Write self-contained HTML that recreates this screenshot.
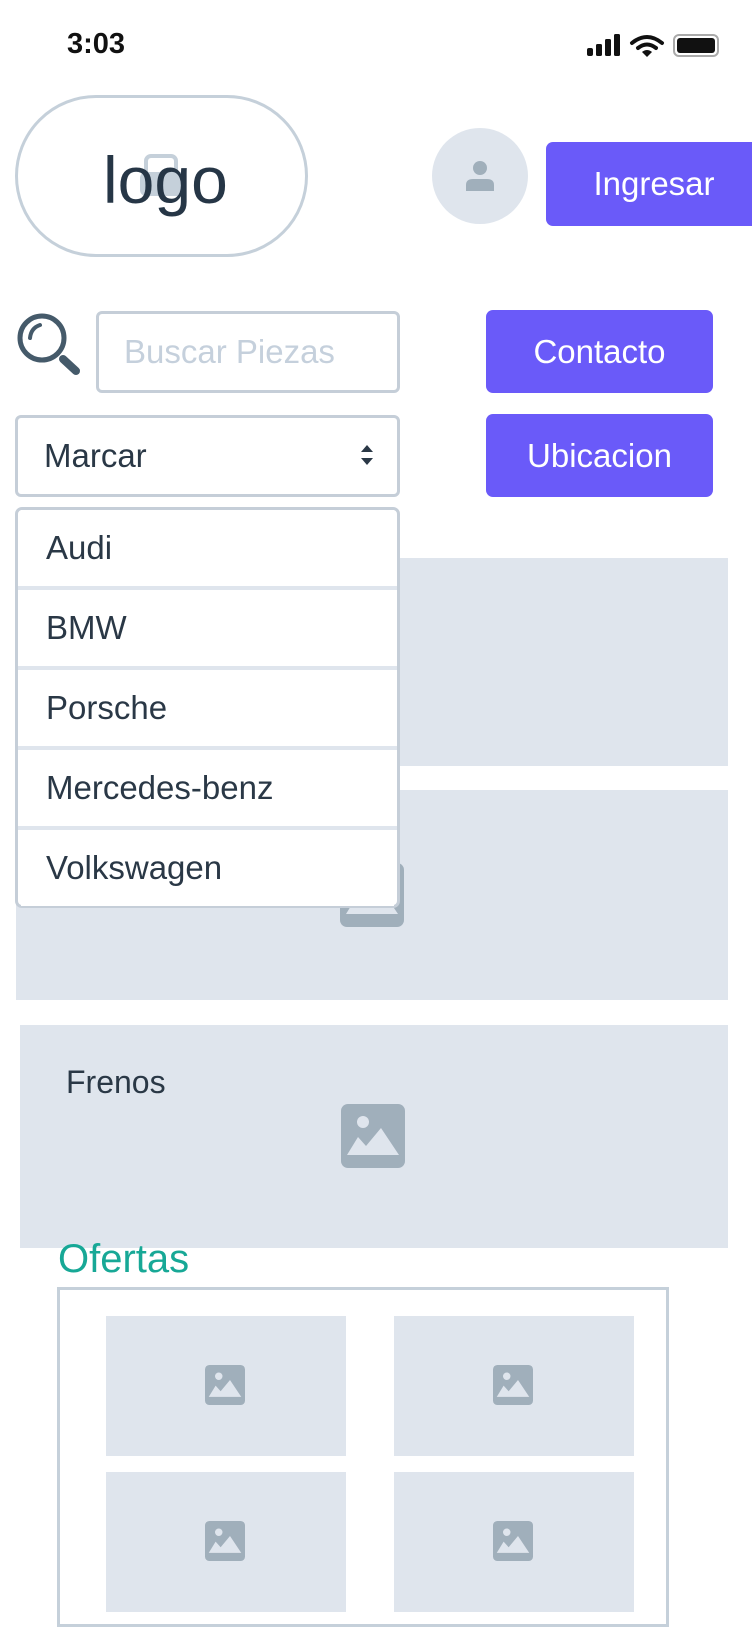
<!DOCTYPE html>
<html><head><meta charset="utf-8"><style>
*{margin:0;padding:0;box-sizing:border-box}
body{width:752px;height:1624px;background:#fff;position:relative;overflow:hidden;font-family:"Liberation Sans",sans-serif;color:#2a3846}
.a{position:absolute}
.btn{position:absolute;background:#6a5af9;color:#fff;border-radius:7px;display:flex;align-items:center;justify-content:center;font-size:33px}
.gray{position:absolute;background:#dfe5ed}
.item{position:absolute;left:3px;right:3px;height:76px;display:flex;align-items:center;padding-left:25px;font-size:33px;background:#fff}
.sep{position:absolute;left:3px;right:3px;height:4px;background:#dfe5ed}
</style></head><body>
<div class="a" style="left:67px;top:28px;font-size:29px;font-weight:bold;color:#111">3:03</div>
<svg class="a" style="left:585px;top:33px" width="135" height="26" viewBox="0 0 135 26">
<rect x="2" y="15" width="6" height="8" rx="2" fill="#111"/>
<rect x="11" y="11" width="6" height="12" rx="1.5" fill="#111"/>
<rect x="20" y="6" width="6" height="17" rx="1.5" fill="#111"/>
<rect x="29" y="1" width="6" height="22" rx="1.5" fill="#111"/>
<path d="M47 10 Q62 -2 77 10" stroke="#111" stroke-width="4" fill="none" stroke-linecap="round"/>
<path d="M53 15 Q62 8 71 15" stroke="#111" stroke-width="4" fill="none" stroke-linecap="round"/>
<path d="M57 19 L62 24 L67 19 Q62 15 57 19Z" fill="#111"/>
<rect x="89" y="2" width="44" height="21" rx="5" fill="none" stroke="#aaa" stroke-width="2"/>
<rect x="92" y="5" width="38" height="15" rx="3" fill="#111"/>
</svg>
<div class="a" style="left:15px;top:95px;width:293px;height:162px;border:3px solid #c5d0da;border-radius:81px"></div>
<svg class="a" style="left:138px;top:152px" width="50" height="50" viewBox="0 0 50 50"><rect x="8" y="4" width="30" height="20" rx="5" fill="none" stroke="#c5d0da" stroke-width="4"/><rect x="2" y="20" width="46" height="24" rx="6" fill="#c5d0da"/></svg>
<div class="a" style="left:103px;top:140px;font-size:66px;color:#263646;line-height:80px">logo</div>
<div class="a" style="left:432px;top:128px;width:96px;height:96px;border-radius:50%;background:#dfe5ed"></div>
<svg class="a" style="left:462px;top:158px" width="36" height="36" viewBox="0 0 36 36"><circle cx="18" cy="10" r="7" fill="#a0afbb"/><path d="M4 33 V27 Q4 21 11 21 H25 Q32 21 32 27 V33Z" fill="#a0afbb"/></svg>
<div class="btn" style="left:546px;top:142px;width:216px;height:84px">Ingresar</div>
<svg class="a" style="left:14px;top:308px" width="70" height="70" viewBox="0 0 70 70"><circle cx="28" cy="30" r="22" fill="none" stroke="#455a6a" stroke-width="5"/><path d="M16 30 Q17 20 26 17" stroke="#455a6a" stroke-width="4" fill="none" stroke-linecap="round"/><path d="M49 51 L62 63" stroke="#455a6a" stroke-width="8" stroke-linecap="round"/></svg>
<div class="a" style="left:96px;top:311px;width:304px;height:82px;border:3px solid #c5ced8;border-radius:6px;display:flex;align-items:center;padding-left:25px;font-size:33px;color:#c5d0dc;white-space:nowrap;overflow:hidden">Buscar Piezas</div>
<div class="btn" style="left:486px;top:310px;width:227px;height:83px">Contacto</div>
<div class="a" style="left:15px;top:415px;width:385px;height:82px;border:3px solid #c5ced8;border-radius:6px;display:flex;align-items:center;padding-left:26px;font-size:33px">Marcar</div>
<svg class="a" style="left:360px;top:443px" width="14" height="24" viewBox="0 0 14 24"><path d="M1 9 L7 2 L13 9Z M1 15 L7 22 L13 15Z" fill="#2a3846"/></svg>
<div class="btn" style="left:486px;top:414px;width:227px;height:83px">Ubicacion</div>
<div class="gray" style="left:16px;top:558px;width:712px;height:208px"></div>
<div class="gray" style="left:16px;top:790px;width:712px;height:210px"></div>
<svg class="a" style="left:340px;top:863px" width="64" height="64" viewBox="0 0 64 64"><rect width="64" height="64" rx="7" fill="#a0afbb"/><circle cx="22" cy="18" r="6" fill="#dfe5ed"/><path d="M6 51 L17 33 L25 42 L40 24 L58 51Z" fill="#dfe5ed"/></svg>
<div class="a" style="left:15px;top:507px;width:385px;height:401px;border:3px solid #c5ced8;border-radius:7px;background:#fff">
<div class="item" style="top:0">Audi</div><div class="sep" style="top:76px;left:0;right:0"></div>
<div class="item" style="top:80px">BMW</div><div class="sep" style="top:156px;left:0;right:0"></div>
<div class="item" style="top:160px">Porsche</div><div class="sep" style="top:236px;left:0;right:0"></div>
<div class="item" style="top:240px">Mercedes-benz</div><div class="sep" style="top:316px;left:0;right:0"></div>
<div class="item" style="top:320px">Volkswagen</div>
</div>
<div class="gray" style="left:20px;top:1025px;width:708px;height:223px"></div>
<div class="a" style="left:66px;top:1064px;font-size:32px">Frenos</div>
<svg class="a" style="left:341px;top:1104px" width="64" height="64" viewBox="0 0 64 64"><rect width="64" height="64" rx="7" fill="#a0afbb"/><circle cx="22" cy="18" r="6" fill="#dfe5ed"/><path d="M6 51 L17 33 L25 42 L40 24 L58 51Z" fill="#dfe5ed"/></svg>
<div class="a" style="left:58px;top:1237px;font-size:40px;color:#17a896">Ofertas</div>
<div class="a" style="left:57px;top:1287px;width:612px;height:340px;border:3px solid #c5d0da"></div>
<div class="gray" style="left:106px;top:1316px;width:240px;height:140px"></div>
<div class="gray" style="left:394px;top:1316px;width:240px;height:140px"></div>
<div class="gray" style="left:106px;top:1472px;width:240px;height:140px"></div>
<div class="gray" style="left:394px;top:1472px;width:240px;height:140px"></div>
<svg class="a" style="left:205px;top:1365px" width="40" height="40" viewBox="0 0 64 64"><rect width="64" height="64" rx="7" fill="#a0afbb"/><circle cx="22" cy="18" r="6" fill="#dfe5ed"/><path d="M6 51 L17 33 L25 42 L40 24 L58 51Z" fill="#dfe5ed"/></svg>
<svg class="a" style="left:493px;top:1365px" width="40" height="40" viewBox="0 0 64 64"><rect width="64" height="64" rx="7" fill="#a0afbb"/><circle cx="22" cy="18" r="6" fill="#dfe5ed"/><path d="M6 51 L17 33 L25 42 L40 24 L58 51Z" fill="#dfe5ed"/></svg>
<svg class="a" style="left:205px;top:1521px" width="40" height="40" viewBox="0 0 64 64"><rect width="64" height="64" rx="7" fill="#a0afbb"/><circle cx="22" cy="18" r="6" fill="#dfe5ed"/><path d="M6 51 L17 33 L25 42 L40 24 L58 51Z" fill="#dfe5ed"/></svg>
<svg class="a" style="left:493px;top:1521px" width="40" height="40" viewBox="0 0 64 64"><rect width="64" height="64" rx="7" fill="#a0afbb"/><circle cx="22" cy="18" r="6" fill="#dfe5ed"/><path d="M6 51 L17 33 L25 42 L40 24 L58 51Z" fill="#dfe5ed"/></svg>
</body></html>
